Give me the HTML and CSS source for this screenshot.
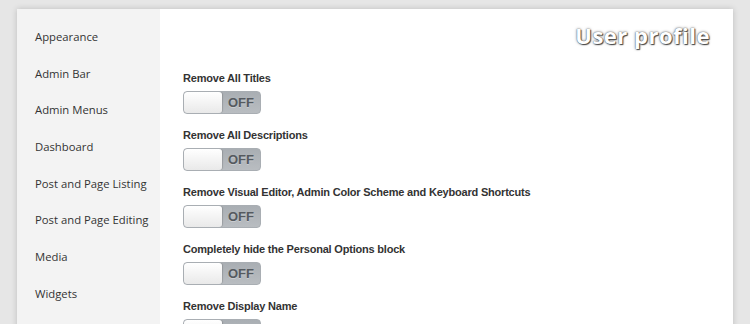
FILE: index.html
```html
<!DOCTYPE html>
<html>
    <head>
        <meta charset="utf-8">
        <link rel="stylesheet" href="styles.css">
        <title>User profile</title>
    </head>
    <body>
        <div class="card">
            <ul class="menu">
                <li>Appearance</li>
                <li>Admin Bar</li>
                <li>Admin Menus</li>
                <li>Dashboard</li>
                <li>Post and Page Listing</li>
                <li>Post and Page Editing</li>
                <li>Media</li>
                <li>Widgets</li>
            </ul>

            <div class="main">
                <h1 class="title">User profile</h1>

                <div class="option">
                    <p class="option-label">Remove All Titles</p>
                    <div class="toggle"><span class="knob"></span><span class="state">OFF</span></div>
                </div>
                <div class="option">
                    <p class="option-label">Remove All Descriptions</p>
                    <div class="toggle"><span class="knob"></span><span class="state">OFF</span></div>
                </div>
                <div class="option">
                    <p class="option-label">Remove Visual Editor, Admin Color Scheme and Keyboard Shortcuts</p>
                    <div class="toggle"><span class="knob"></span><span class="state">OFF</span></div>
                </div>
                <div class="option">
                    <p class="option-label">Completely hide the Personal Options block</p>
                    <div class="toggle"><span class="knob"></span><span class="state">OFF</span></div>
                </div>
                <div class="option">
                    <p class="option-label">Remove Display Name</p>
                    <div class="toggle"><span class="knob"></span><span class="state">OFF</span></div>
                </div>
            </div>
        </div>
    </body>
</html>
```

FILE: styles.css
```css
html, body {
    margin: 0;
    height: 100%;
    overflow: hidden;
}

body {
    background: #e6e6e6;
    padding: 9px 17px 0 17px;
    box-sizing: border-box;
}

.card {
    display: flex;
    height: 400px;
    background: #ffffff;
    box-shadow: 0 0 6px rgba(0, 0, 0, 0.18);
}

.menu {
    width: 143px;
    margin: 0;
    padding: 19px 0 0 18px;
    box-sizing: border-box;
    list-style: none;
    background: #f3f3f3;
    font-family: "Open Sans", sans-serif;
    font-size: 11.3px;
    color: #333333;
}

.menu li {
    height: 36.7px;
    line-height: 18px;
}

.main {
    flex: 1;
    padding: 12px 23px 0 23px;
}

.title {
    margin: 0 0 22px 0;
    text-align: right;
    font-family: "Open Sans", sans-serif;
    font-size: 22px;
    font-weight: bold;
    line-height: 28px;
    letter-spacing: 0.5px;
    color: #ffffff;
    text-shadow: 0 0 1px #555555, 1px 1px 1px #444444, 0 0 3px rgba(0, 0, 0, 0.5);
}

.option {
    height: 57px;
}

.option-label {
    margin: 0 0 6px 0;
    font-family: "Liberation Sans", Arial, sans-serif;
    font-size: 11px;
    font-weight: bold;
    line-height: 14px;
    letter-spacing: -0.2px;
    color: #333333;
}

.toggle {
    display: flex;
    width: 78px;
    height: 23px;
    box-sizing: border-box;
    border: 1px solid #a9aeb3;
    border-radius: 4px;
    background: linear-gradient(#a9aeb3, #b9bdc1);
    overflow: hidden;
}

.knob {
    width: 38px;
    border-radius: 3px;
    background: linear-gradient(#ffffff, #e9e9e9);
    box-shadow: 1px 0 1px rgba(0, 0, 0, 0.15);
}

.state {
    flex: 1;
    text-align: center;
    font-family: "Liberation Sans", Arial, sans-serif;
    font-size: 13px;
    font-weight: bold;
    line-height: 21px;
    color: #555a5f;
    text-shadow: 0 1px 0 rgba(255, 255, 255, 0.3);
}
```
